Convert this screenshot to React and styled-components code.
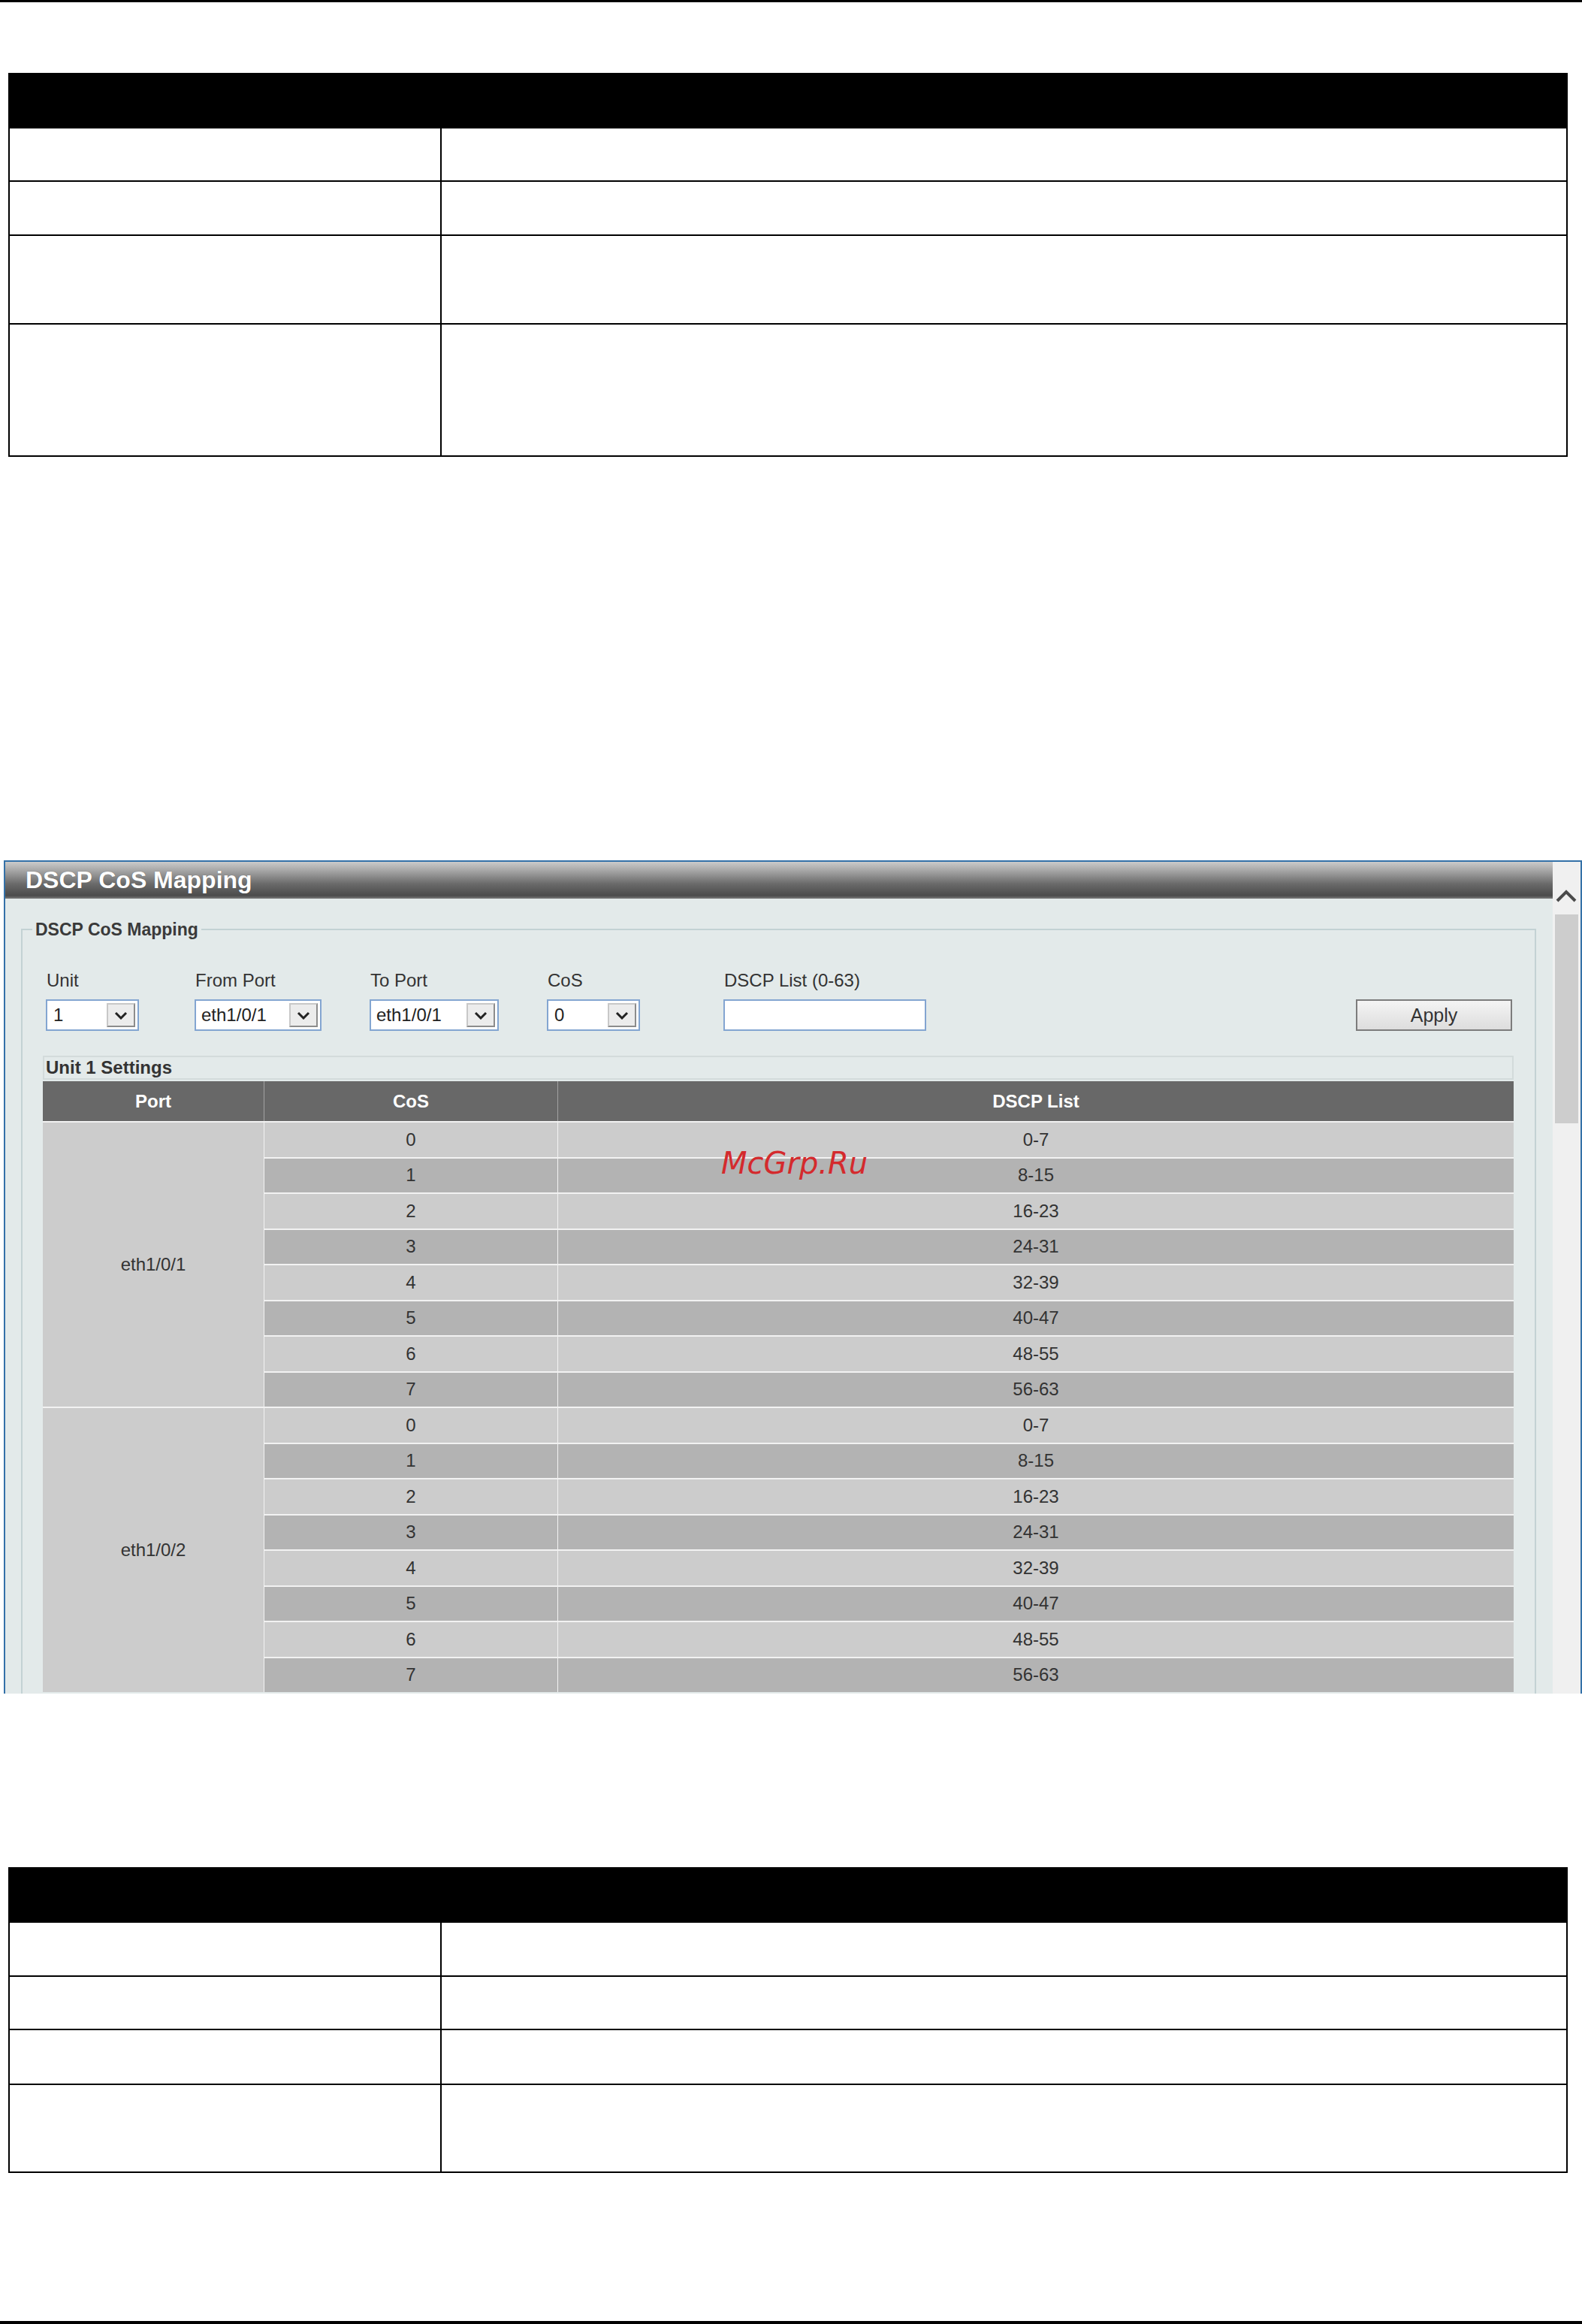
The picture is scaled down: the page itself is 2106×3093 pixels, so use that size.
import React from "react";
import styled, { createGlobalStyle } from "styled-components";

const GlobalStyle = createGlobalStyle`
  html, body {
    margin: 0;
    padding: 0;
    background: #fff;
  }
  body {
    font-family: "Liberation Sans", Arial, sans-serif;
  }
`;

const Page = styled.div`
  width: 2106px;
  height: 3093px;
  display: flex;
  flex-direction: column;
  overflow: hidden;
`;

const Rule = styled.div`
  height: ${({ $h }) => $h}px;
  margin-top: ${({ $top }) => $top || 0}px;
  background: #000;
  flex-shrink: 0;
`;

/* plain black-bordered parameter tables */
const SpecTable = styled.div`
  margin: ${({ $top }) => $top}px 0 0 11px;
  width: 2076px;
  box-sizing: border-box;
  border: 2px solid #000;
  border-top: none;
  flex-shrink: 0;
`;

const SpecHead = styled.div`
  height: 72px;
  background: #000;
`;

const SpecRow = styled.div`
  display: grid;
  grid-template-columns: 575px 1fr;
  height: ${({ $h }) => $h}px;
  box-sizing: border-box;
  border-top: 2px solid #000;
`;

const SpecCell = styled.div`
  border-right: ${({ $first }) => ($first ? "2px solid #000" : "none")};
`;

const Spec = ({ top, rows }) => (
  <SpecTable $top={top}>
    <SpecHead />
    {rows.map((h, i) => (
      <SpecRow key={i} $h={h}>
        <SpecCell $first />
        <SpecCell />
      </SpecRow>
    ))}
  </SpecTable>
);

/* screenshot panel */
const Panel = styled.section`
  position: relative;
  margin: 537px 0 0 5px;
  width: 2101px;
  height: 1109px;
  box-sizing: border-box;
  border: 2px solid #3471a8;
  border-bottom: none;
  display: flex;
  overflow: hidden;
  background: #e3eaea;
  flex-shrink: 0;
`;

const Main = styled.div`
  flex: 1;
  min-width: 0;
  display: flex;
  flex-direction: column;
`;

const TitleBar = styled.div`
  height: 49px;
  flex-shrink: 0;
  box-sizing: border-box;
  padding-left: 27px;
  line-height: 49px;
  font-size: 32px;
  font-weight: bold;
  color: #fff;
  text-shadow: 0 0 1px rgba(0, 0, 0, 0.4);
  background: linear-gradient(
    to bottom,
    #cbcbcb 0%,
    #a4a4a4 25%,
    #6a6a6a 60%,
    #4b4b4b 92%,
    #7c7c7c 100%
  );
`;

const Fieldset = styled.fieldset`
  margin: 28px 22px 0 21px;
  padding: 41px 28px 40px 27px;
  border: 2px solid #c3d2d4;
  min-width: 0;
`;

const Legend = styled.legend`
  margin-left: -14px;
  padding: 0 4px;
  line-height: 26px;
  font-size: 23px;
  font-weight: bold;
  color: #3a3a3a;
`;

const FormRow = styled.div`
  display: grid;
  grid-template-columns: 198px 233px 236px 235px 270px 1fr auto;
  padding-left: 4px;
`;

const Field = styled.div`
  display: flex;
  flex-direction: column;
  gap: 12px;
`;

const Label = styled.span`
  padding-left: 1px;
  line-height: 27px;
  font-size: 24px;
  color: #333;
`;

const SelectBox = styled.div`
  width: ${({ $w }) => $w}px;
  height: 42px;
  box-sizing: border-box;
  border: 2px solid #83a5d1;
  background: #fff;
  display: flex;
  align-items: center;
  padding-left: ${({ $pad }) => $pad || 8}px;
  font-size: 24px;
  color: #222;
`;

const DropButton = styled.span`
  margin-left: auto;
  margin-right: 3px;
  width: 38px;
  height: 32px;
  box-sizing: border-box;
  border: 2px solid;
  border-color: #c8c8c8 #8c8c8c #8c8c8c #c8c8c8;
  background: #ececec;
  display: flex;
  align-items: center;
  justify-content: center;
`;

const TextBox = styled.div`
  width: 270px;
  height: 42px;
  box-sizing: border-box;
  border: 2px solid #83a5d1;
  background: #fff;
`;

const ApplyButton = styled.button`
  grid-column: 7;
  align-self: end;
  margin-right: 2px;
  width: 208px;
  height: 42px;
  box-sizing: border-box;
  border: 2px solid #7c7c7c;
  background: linear-gradient(to bottom, #f4f4f4, #dddddd);
  font-family: "Liberation Sans", Arial, sans-serif;
  font-size: 25px;
  color: #333;
  padding: 0;
`;

const UnitBox = styled.div`
  margin-top: 33px;
  height: 32px;
  box-sizing: border-box;
  border: 2px solid #d3dbdb;
  padding-left: 2px;
  line-height: 28px;
  font-size: 24px;
  font-weight: bold;
  color: #333;
`;

const DataGrid = styled.div`
  margin-top: 2px;
  display: grid;
  grid-template-columns: 294px 391px 1fr;
  grid-template-rows: 53px;
  grid-auto-rows: 47.5px;
`;

const HeadCell = styled.div`
  grid-column: ${({ $col }) => $col};
  background: #686868;
  border-left: ${({ $col }) => ($col > 1 ? "1px solid #a2a2a2" : "none")};
  display: flex;
  align-items: center;
  justify-content: center;
  font-size: 24px;
  font-weight: bold;
  color: #fff;
`;

const PortCell = styled.div`
  grid-column: 1;
  grid-row: span 8;
  background: #cccccc;
  border-top: 2px solid #f2f2f2;
  display: flex;
  align-items: center;
  justify-content: center;
  font-size: 24px;
  color: #333;
`;

const DataCell = styled.div`
  grid-column: ${({ $col }) => $col};
  background: ${({ $dark }) => ($dark ? "#b3b3b3" : "#cccccc")};
  border-top: 2px solid #f2f2f2;
  border-left: 1px solid #f2f2f2;
  display: flex;
  align-items: center;
  justify-content: center;
  font-size: 24px;
  color: #333;
`;

const Watermark = styled.div`
  position: absolute;
  left: 953px;
  top: 378px;
  font-family: "DejaVu Sans", sans-serif;
  font-style: italic;
  font-size: 40px;
  color: #d42a2d;
  z-index: 2;
  pointer-events: none;
`;

const Scrollbar = styled.div`
  width: 37px;
  flex-shrink: 0;
  background: #f0f0f0;
  display: flex;
  flex-direction: column;
`;

const ScrollArrow = styled.div`
  height: 70px;
  box-sizing: border-box;
  padding: 36px 0 0 3px;
`;

const ScrollThumb = styled.div`
  margin-left: 3px;
  width: 31px;
  height: 278px;
  background: #cdcdcd;
`;

const Chevron = () => (
  <svg width="18" height="11" viewBox="0 0 18 11">
    <polyline
      points="2,2 9,9 16,2"
      fill="none"
      stroke="#222"
      strokeWidth="3"
    />
  </svg>
);

const Select = ({ w, value, pad }) => (
  <SelectBox $w={w} $pad={pad}>
    {value}
    <DropButton>
      <Chevron />
    </DropButton>
  </SelectBox>
);

const ranges = ["0-7", "8-15", "16-23", "24-31", "32-39", "40-47", "48-55", "56-63"];
const ports = ["eth1/0/1", "eth1/0/2"];

export default function App() {
  return (
    <Page>
      <GlobalStyle />
      <Rule $h={3} />
      <Spec top={94} rows={[71, 72, 118, 176]} />

      <Panel>
        <Main>
          <TitleBar>DSCP CoS Mapping</TitleBar>
          <Fieldset>
            <Legend>DSCP CoS Mapping</Legend>
            <FormRow>
              <Field>
                <Label>Unit</Label>
                <Select w={124} value="1" />
              </Field>
              <Field>
                <Label>From Port</Label>
                <Select w={169} value="eth1/0/1" pad={7} />
              </Field>
              <Field>
                <Label>To Port</Label>
                <Select w={172} value="eth1/0/1" pad={7} />
              </Field>
              <Field>
                <Label>CoS</Label>
                <Select w={124} value="0" />
              </Field>
              <Field>
                <Label>DSCP List (0-63)</Label>
                <TextBox />
              </Field>
              <ApplyButton>Apply</ApplyButton>
            </FormRow>

            <UnitBox>Unit 1 Settings</UnitBox>
            <DataGrid>
              <HeadCell $col={1}>Port</HeadCell>
              <HeadCell $col={2}>CoS</HeadCell>
              <HeadCell $col={3}>DSCP List</HeadCell>
              {ports.map((port) => (
                <React.Fragment key={port}>
                  <PortCell>{port}</PortCell>
                  {ranges.map((r, i) => (
                    <React.Fragment key={r}>
                      <DataCell $col={2} $dark={i % 2 === 1}>
                        {i}
                      </DataCell>
                      <DataCell $col={3} $dark={i % 2 === 1}>
                        {r}
                      </DataCell>
                    </React.Fragment>
                  ))}
                </React.Fragment>
              ))}
            </DataGrid>
          </Fieldset>
        </Main>
        <Scrollbar>
          <ScrollArrow>
            <svg width="30" height="18" viewBox="0 0 30 18">
              <polyline
                points="3,16 15,4 27,16"
                fill="none"
                stroke="#4a4a4a"
                strokeWidth="4"
              />
            </svg>
          </ScrollArrow>
          <ScrollThumb />
        </Scrollbar>
        <Watermark>McGrp.Ru</Watermark>
      </Panel>

      <Spec top={231} rows={[72, 71, 73, 117]} />
      <Rule $h={4} $top={197} />
    </Page>
  );
}
